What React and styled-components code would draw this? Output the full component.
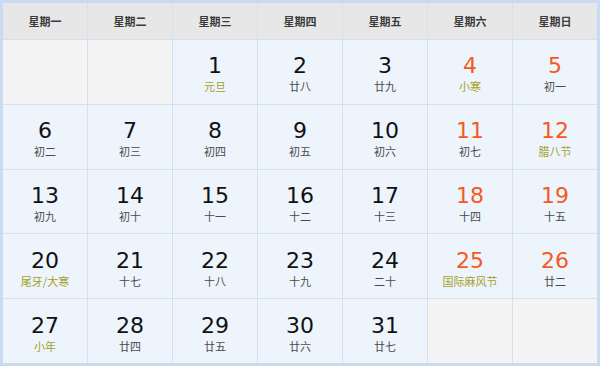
import React from 'react';
import styled, { createGlobalStyle } from 'styled-components';

const Global = createGlobalStyle`
  body {
    margin: 0;
    background: #fff;
    font-family: "DejaVu Sans", "Noto Sans CJK SC", sans-serif;
  }
`;

const weekDays = ['星期一', '星期二', '星期三', '星期四', '星期五', '星期六', '星期日'];

// [day, lunar, isFestival]
const days = [
  [1, '元旦', true], [2, '廿八'], [3, '廿九'], [4, '小寒', true], [5, '初一'],
  [6, '初二'], [7, '初三'], [8, '初四'], [9, '初五'], [10, '初六'], [11, '初七'], [12, '腊八节', true],
  [13, '初九'], [14, '初十'], [15, '十一'], [16, '十二'], [17, '十三'], [18, '十四'], [19, '十五'],
  [20, '尾牙/大寒', true], [21, '十七'], [22, '十八'], [23, '十九'], [24, '二十'], [25, '国际麻风节', true], [26, '廿二'],
  [27, '小年', true], [28, '廿四'], [29, '廿五'], [30, '廿六'], [31, '廿七'],
];

const Calendar = styled.div`
  box-sizing: border-box;
  width: 600px;
  height: 366px;
  border: 3px solid #c9dbf1;
  display: grid;
  grid-template-columns: repeat(7, 1fr);
  grid-template-rows: 36px repeat(5, 1fr);
  gap: 1px;
  background: #d4e0ef;
`;

const Head = styled.div`
  background: #e7e7e7;
  color: #3a3a3a;
  font-size: 11px;
  font-weight: bold;
  font-family: "Noto Sans CJK SC", sans-serif;
  display: flex;
  align-items: center;
  justify-content: center;
`;

const Cell = styled.div`
  background: ${p => (p.$empty ? '#f4f4f4' : '#edf4fc')};
  display: flex;
  flex-direction: column;
  align-items: center;
  justify-content: center;
  padding-top: 3px;
`;

const Num = styled.div`
  font-family: "DejaVu Sans", Verdana, sans-serif;
  font-size: 22px;
  line-height: 26px;
  color: ${p => (p.$weekend ? '#f6591d' : '#111')};
`;

const Lunar = styled.div`
  font-family: "Noto Sans CJK SC", sans-serif;
  font-size: 11px;
  line-height: 14px;
  color: ${p => (p.$fest ? '#a3a21c' : '#4a4a4a')};
`;

export default function App() {
  const cells = [null, null, ...days, null, null];
  return (
    <>
      <Global />
      <Calendar>
        {weekDays.map(w => <Head key={w}>{w}</Head>)}
        {cells.map((d, i) =>
          d ? (
            <Cell key={i}>
              <Num $weekend={i % 7 >= 5}>{d[0]}</Num>
              <Lunar $fest={d[2]}>{d[1]}</Lunar>
            </Cell>
          ) : (
            <Cell key={i} $empty />
          )
        )}
      </Calendar>
    </>
  );
}
